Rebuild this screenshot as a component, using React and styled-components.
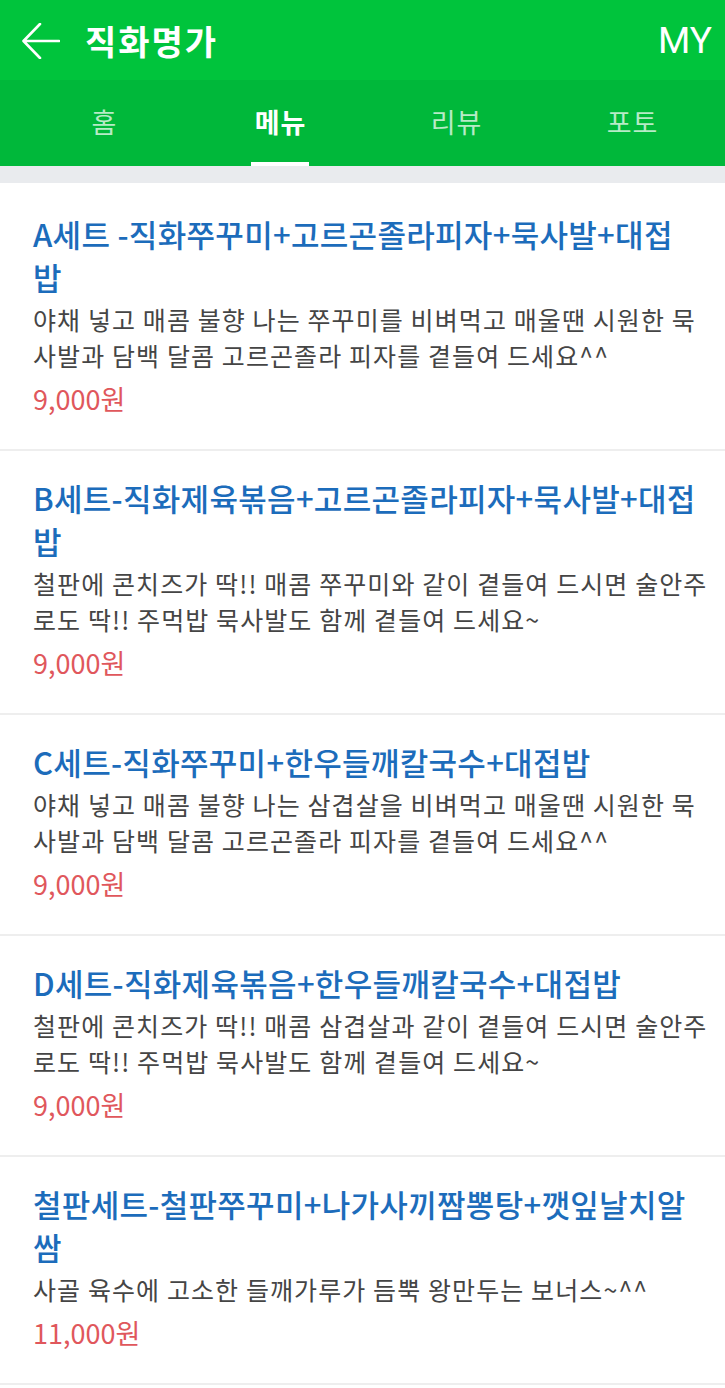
import React from "react";
import styled, { createGlobalStyle } from "styled-components";

const GlobalStyle = createGlobalStyle`
  body {
    margin: 0;
    background: #ffffff;
    font-family: "Noto Sans CJK KR", "Noto Sans", sans-serif;
  }
`;

const menus = [
  {
    name: "A세트 -직화쭈꾸미+고르곤졸라피자+묵사발+대접밥",
    desc: "야채 넣고 매콤 불향 나는 쭈꾸미를 비벼먹고 매울땐 시원한 묵사발과 담백 달콤 고르곤졸라 피자를 곁들여 드세요^^",
    price: "9,000원",
  },
  {
    name: "B세트-직화제육볶음+고르곤졸라피자+묵사발+대접밥",
    desc: "철판에 콘치즈가 딱!! 매콤 쭈꾸미와 같이 곁들여 드시면 술안주로도 딱!! 주먹밥 묵사발도 함께 곁들여 드세요~",
    price: "9,000원",
  },
  {
    name: "C세트-직화쭈꾸미+한우들깨칼국수+대접밥",
    desc: "야채 넣고 매콤 불향 나는 삼겹살을 비벼먹고 매울땐 시원한 묵사발과 담백 달콤 고르곤졸라 피자를 곁들여 드세요^^",
    price: "9,000원",
  },
  {
    name: "D세트-직화제육볶음+한우들깨칼국수+대접밥",
    desc: "철판에 콘치즈가 딱!! 매콤 삼겹살과 같이 곁들여 드시면 술안주로도 딱!! 주먹밥 묵사발도 함께 곁들여 드세요~",
    price: "9,000원",
  },
  {
    name: "철판세트-철판쭈꾸미+나가사끼짬뽕탕+깻잎날치알쌈",
    desc: "사골 육수에 고소한 들깨가루가 듬뿍 왕만두는 보너스~^^",
    price: "11,000원",
  },
];

const tabs = ["홈", "메뉴", "리뷰", "포토"];

const App = () => {
  return (
    <Page>
      <GlobalStyle />
      <Header>
        <BackButton>
          <svg width="38" height="36" viewBox="0 0 38 36" fill="none">
            <path
              d="M37 18H2M18 1L1.5 18L18 35"
              stroke="#ffffff"
              strokeWidth="2.6"
              strokeLinecap="round"
              strokeLinejoin="round"
            />
          </svg>
        </BackButton>
        <StoreName>직화명가</StoreName>
        <MyLink>MY</MyLink>
      </Header>
      <TabBar>
        {tabs.map((tab) => (
          <Tab key={tab} active={tab === "메뉴"}>
            <span>{tab}</span>
          </Tab>
        ))}
      </TabBar>
      <MenuList>
        {menus.map((menu, index) => (
          <MenuItem key={index}>
            <MenuName>{menu.name}</MenuName>
            <MenuDesc>{menu.desc}</MenuDesc>
            <MenuPrice>{menu.price}</MenuPrice>
          </MenuItem>
        ))}
      </MenuList>
    </Page>
  );
};

const Page = styled.div`
  width: 725px;
  min-height: 1388px;
  background: #ffffff;
  overflow: hidden;
`;

const Header = styled.header`
  height: 80px;
  background: #00c43c;
  display: flex;
  align-items: center;
  padding: 0 13px 0 22px;
  box-sizing: border-box;
`;

const BackButton = styled.div`
  width: 38px;
  height: 36px;
  display: flex;
  margin-top: 1px;
`;

const StoreName = styled.h1`
  margin: 0 0 0 25px;
  flex: 1;
  color: #ffffff;
  font-size: 34px;
  font-weight: 700;
  letter-spacing: 2px;
`;

const MyLink = styled.span`
  color: #ffffff;
  font-family: Roboto, "Noto Sans", sans-serif;
  font-size: 37px;
  font-weight: 400;
`;

const TabBar = styled.nav`
  height: 86px;
  background: #00b83a;
  display: grid;
  grid-template-columns: repeat(4, 1fr);
  padding: 0 5px 0 16px;
  border-bottom: 17px solid #e9ebee;
`;

const Tab = styled.div`
  display: flex;
  justify-content: center;
  align-items: stretch;

  span {
    display: flex;
    align-items: center;
    padding: 0 3px 0 4px;
    font-size: 27px;
    letter-spacing: 1px;
    color: ${({ active }) => (active ? "#ffffff" : "rgba(255, 255, 255, 0.72)")};
    font-weight: ${({ active }) => (active ? 700 : 400)};
    border-bottom: 4px solid ${({ active }) => (active ? "#ffffff" : "transparent")};
  }
`;

const MenuList = styled.ul`
  list-style: none;
  margin: 0;
  padding: 0;
`;

const MenuItem = styled.li`
  padding: 25px 12px 32px 33px;
  border-bottom: 2px solid #eeeeee;

  &:first-child {
    padding-top: 29px;
  }
`;

const MenuName = styled.h3`
  margin: 0;
  padding-right: 16px;
  color: #1c6cbb;
  font-size: 31px;
  font-weight: 500;
  line-height: 43px;
  letter-spacing: 0.3px;
`;

const MenuDesc = styled.p`
  margin: 3px 0 0;
  color: #454545;
  font-size: 25px;
  line-height: 36px;
  letter-spacing: 1.1px;
`;

const MenuPrice = styled.p`
  margin: 8px 0 0;
  color: #e0575c;
  font-size: 27px;
  line-height: 36px;
`;

export default App;
